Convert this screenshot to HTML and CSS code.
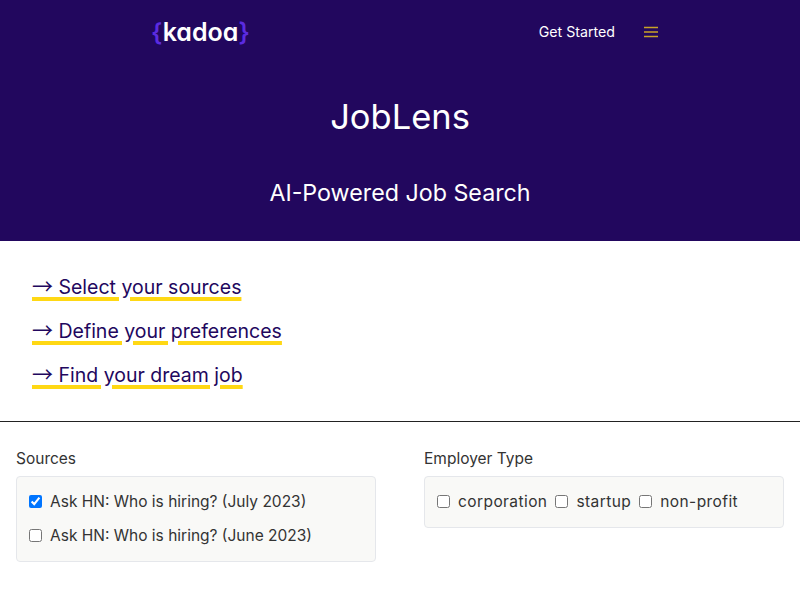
FILE: index.html
```html
<!DOCTYPE html>
<html lang="en">
<head>
    <meta charset="UTF-8">
    <meta name="viewport" content="width=device-width, initial-scale=1.0">
    <title>JobLens</title>
    <link rel="stylesheet" href="styles.css">
</head>
<body>
    <header class="hero">
        <nav class="nav">
            <a class="logo" href="#"><span class="brace">{</span>kadoa<span class="brace">}</span></a>
            <div class="nav-right">
                <a class="nav-link" href="#">Get Started</a>
                <button class="menu-btn" aria-label="Menu">
                    <svg width="14" height="12" viewBox="0 0 14 12"><path d="M0 1.5h14M0 6h14M0 10.5h14" stroke="#c9a227" stroke-width="1.5" fill="none"/></svg>
                </button>
            </div>
        </nav>
        <h1>JobLens</h1>
        <h2>AI-Powered Job Search</h2>
    </header>

    <!-- Steps -->
    <section class="steps">
        <p><a href="#"><span class="arrow">→</span> Select your sources</a></p>
        <p><a href="#"><span class="arrow">→</span> Define your preferences</a></p>
        <p><a href="#"><span class="arrow">→</span> Find your dream job</a></p>
    </section>

    <hr class="divider">

    <!-- Filters -->
    <main class="filters">
        <div class="filter">
            <div class="filter-label">Sources</div>
            <div class="filter-box stacked">
                <label class="check"><input type="checkbox" checked> Ask HN: Who is hiring? (July 2023)</label>
                <label class="check"><input type="checkbox"> Ask HN: Who is hiring? (June 2023)</label>
            </div>
        </div>
        <div class="filter">
            <div class="filter-label">Employer Type</div>
            <div class="filter-box inline">
                <label class="check"><input type="checkbox"> corporation</label>
                <label class="check"><input type="checkbox"> startup</label>
                <label class="check"><input type="checkbox"> non-profit</label>
            </div>
        </div>
    </main>
</body>
</html>
```
FILE: styles.css
```css
* {
    margin: 0;
    padding: 0;
    box-sizing: border-box;
}

body {
    font-family: 'Inter', 'Liberation Sans', sans-serif;
    background-color: #fff;
    color: #333;
}

/* Header */
.hero {
    background-color: #22075e;
    color: #fff;
    height: 241px;
    text-align: center;
}

.nav {
    display: flex;
    justify-content: space-between;
    align-items: center;
    height: 64px;
    padding: 0 142px 0 151px;
}

.logo {
    color: #fff;
    font-size: 25px;
    font-weight: 600;
    font-feature-settings: "cv11";
    text-decoration: none;
    line-height: 32px;
}

.brace {
    color: #5b2be0;
}

.nav-right {
    display: flex;
    align-items: center;
    gap: 29px;
}

.nav-link {
    color: #fff;
    font-size: 14.2px;
    text-decoration: none;
    margin-bottom: 2px;
}

.menu-btn {
    display: flex;
    background: none;
    border: none;
}

.hero h1 {
    font-size: 34.5px;
    font-weight: 400;
    line-height: 44px;
    margin-top: 31px;
}

.hero h2 {
    font-size: 23.25px;
    font-weight: 400;
    line-height: 32px;
    margin-top: 38px;
}

/* Steps */
.steps {
    padding: 32px 32px 0;
    height: 180px;
}

.steps p {
    font-size: 19.5px;
    line-height: 28px;
    margin-bottom: 16px;
}

.steps a {
    color: #22075e;
    text-decoration: underline #ffd814 3.5px;
    text-underline-offset: 3px;
}

.arrow {
    font-family: 'Noto Sans CJK SC', sans-serif;
    font-size: 21px;
    line-height: 20px;
}

.divider {
    border: none;
    border-top: 1px solid #222;
}

/* Filters */
.filters {
    display: grid;
    grid-template-columns: 1fr 1fr;
    gap: 48px;
    padding: 27px 16px 0;
}

.filter-label {
    font-size: 15.5px;
    line-height: 20px;
    margin-bottom: 7px;
}

.filter-box {
    background-color: #f9f9f7;
    border: 1px solid #e5e7eb;
    border-radius: 4px;
    padding: 14px 12px;
    font-size: 15.5px;
}

.stacked {
    display: flex;
    flex-direction: column;
    gap: 12px;
}

.inline {
    display: flex;
    gap: 8px;
    letter-spacing: 0.42px;
}

.check {
    display: flex;
    align-items: center;
    gap: 8px;
    line-height: 22px;
}

.check input {
    width: 13px;
    height: 13px;
    margin-bottom: 2px;
}
```
